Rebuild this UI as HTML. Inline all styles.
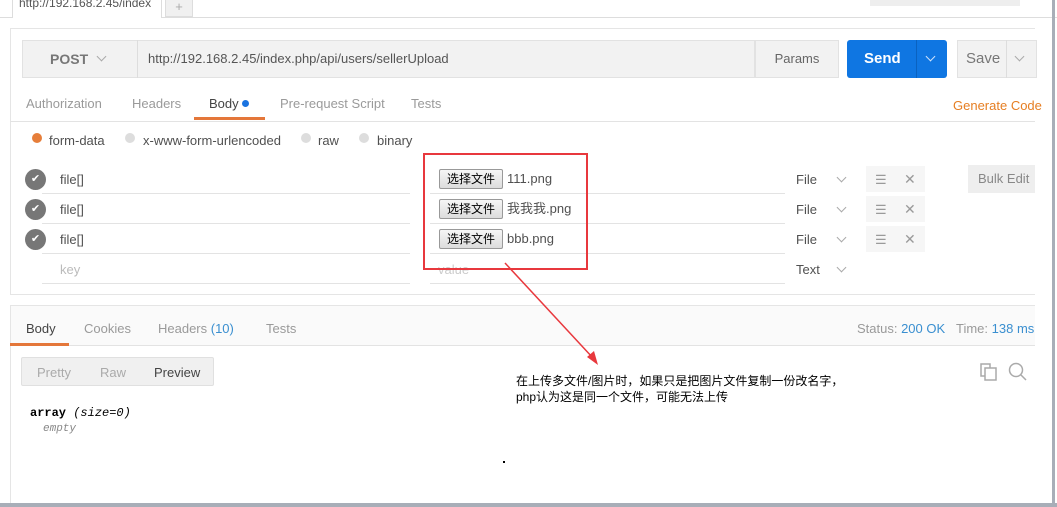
<!DOCTYPE html>
<html><head><meta charset="utf-8"><style>
*{margin:0;padding:0;box-sizing:border-box}
body{width:1057px;height:507px;overflow:hidden;background:#fff;position:relative;font-family:"Liberation Sans","Noto Sans CJK SC",sans-serif;font-size:13px;color:#505050}
.a{position:absolute;white-space:nowrap;line-height:16px}
.g{color:#9a9a9a}
.l{position:absolute;height:1px;background:#e3e3e3}
.btn{position:absolute;width:64px;height:20px;border:1px solid #999;border-radius:2px;background:linear-gradient(#f6f6f6,#dcdcdc);color:#000;font-size:12px;text-align:center;line-height:18px}
.chk{position:absolute;width:21px;height:21px;border-radius:50%;background:#777;color:#fff;font-size:11px;text-align:center;line-height:21px}
.chev{position:absolute;width:7px;height:7px;border-right:1.3px solid #aaa;border-bottom:1.3px solid #aaa;transform:rotate(45deg)}
</style></head><body>
<div class="a" style="left:0;top:0;width:1057px;height:18px;border-bottom:1px solid #ddd;background:#fff"></div>
<div class="a" style="left:12px;top:-2px;width:150px;height:20px;border:1px solid #ddd;border-bottom:none;background:#fff"></div>
<div class="a" style="left:19px;top:-5px;color:#555;font-size:12px">http://192.168.2.45/index</div>
<div class="a" style="left:165px;top:-2px;width:28px;height:19px;background:#f0f0f0;border:1px solid #ddd;text-align:center;color:#aaa">+</div>
<div class="a" style="left:870px;top:0;width:150px;height:6px;background:#eee"></div>
<div class="a" style="left:1052px;top:0;width:3px;height:507px;background:#a8aeb8"></div>
<div class="a" style="left:10px;top:28px;width:1025px;height:267px;border:1px solid #e5e5e5;border-right:none;background:#fff"></div>
<div class="a" style="left:22px;top:40px;width:733px;height:38px;background:#f2f2f2;border:1px solid #e2e2e2"></div>
<div class="a" style="left:137px;top:40px;width:1px;height:38px;background:#ddd"></div>
<div class="a" style="left:50px;top:51px;font-size:14px;font-weight:bold;color:#777">POST</div>
<div class="chev" style="left:98px;top:53px"></div>
<div class="a" style="left:148px;top:51px;color:#555">http://192.168.2.45/index.php/api/users/sellerUpload</div>
<div class="a" style="left:755px;top:40px;width:84px;height:38px;background:#f2f2f2;border:1px solid #e2e2e2;text-align:center;line-height:36px;color:#666">Params</div>
<div class="a" style="left:847px;top:40px;width:100px;height:38px;background:#0f76e2;border-radius:3px"></div>
<div class="a" style="left:916px;top:40px;width:1px;height:38px;background:#0a62c0"></div>
<div class="a" style="left:864px;top:51px;font-size:15px;font-weight:bold;color:#fff">Send</div>
<div class="chev" style="left:927px;top:53px;border-color:#cfe2fa"></div>
<div class="a" style="left:957px;top:40px;width:80px;height:38px;background:#f2f2f2;border:1px solid #e2e2e2"></div>
<div class="a" style="left:1006px;top:40px;width:1px;height:38px;background:#ddd"></div>
<div class="a" style="left:966px;top:51px;font-size:15px;color:#777">Save</div>
<div class="chev" style="left:1016px;top:53px"></div>
<div class="a g" style="left:26px;top:96px">Authorization</div>
<div class="a g" style="left:132px;top:96px">Headers</div>
<div class="a" style="left:209px;top:96px;color:#444">Body</div>
<div class="a" style="left:242px;top:100px;width:7px;height:7px;border-radius:50%;background:#1a73e0"></div>
<div class="a g" style="left:280px;top:96px">Pre-request Script</div>
<div class="a g" style="left:411px;top:96px">Tests</div>
<div class="a" style="left:953px;top:98px;color:#e67e22">Generate Code</div>
<div class="l" style="left:10px;top:121px;width:1025px"></div>
<div class="a" style="left:194px;top:117px;width:71px;height:3px;background:#e4773a"></div>
<div class="a" style="left:32px;top:133px;width:10px;height:10px;border-radius:50%;background:#e67e3a"></div>
<div class="a" style="left:49px;top:133px">form-data</div>
<div class="a" style="left:125px;top:133px;width:10px;height:10px;border-radius:50%;background:#ddd"></div>
<div class="a" style="left:143px;top:133px">x-www-form-urlencoded</div>
<div class="a" style="left:301px;top:133px;width:10px;height:10px;border-radius:50%;background:#ddd"></div>
<div class="a" style="left:318px;top:133px">raw</div>
<div class="a" style="left:359px;top:133px;width:10px;height:10px;border-radius:50%;background:#ddd"></div>
<div class="a" style="left:377px;top:133px">binary</div>

<div class="chk" style="left:25px;top:169px">✔</div>
<div class="chk" style="left:25px;top:199px">✔</div>
<div class="chk" style="left:25px;top:229px">✔</div>
<div class="a" style="left:60px;top:172px">file[]</div>
<div class="a" style="left:60px;top:202px">file[]</div>
<div class="a" style="left:60px;top:232px">file[]</div>
<div class="a" style="left:60px;top:262px;color:#bbb">key</div>
<div class="l" style="left:42px;top:193px;width:368px"></div>
<div class="l" style="left:42px;top:223px;width:368px"></div>
<div class="l" style="left:42px;top:253px;width:368px"></div>
<div class="l" style="left:42px;top:283px;width:368px"></div>
<div class="l" style="left:430px;top:193px;width:355px"></div>
<div class="l" style="left:430px;top:223px;width:355px"></div>
<div class="l" style="left:430px;top:253px;width:355px"></div>
<div class="l" style="left:430px;top:283px;width:355px"></div>
<div class="btn" style="left:439px;top:169px">选择文件</div>
<div class="btn" style="left:439px;top:199px">选择文件</div>
<div class="btn" style="left:439px;top:229px">选择文件</div>
<div class="a" style="left:507px;top:171px">111.png</div>
<div class="a" style="left:507px;top:201px">我我我.png</div>
<div class="a" style="left:507px;top:231px">bbb.png</div>
<div class="a" style="left:438px;top:262px;color:#ccc">value</div>
<div class="a" style="left:423px;top:153px;width:165px;height:117px;border:2px solid #e8383d"></div>

<div class="a" style="left:796px;top:172px">File</div><div class="chev" style="left:838px;top:174px"></div>
<div class="a" style="left:796px;top:202px">File</div><div class="chev" style="left:838px;top:204px"></div>
<div class="a" style="left:796px;top:232px">File</div><div class="chev" style="left:838px;top:234px"></div>
<div class="a" style="left:796px;top:262px">Text</div><div class="chev" style="left:838px;top:264px"></div>
<div class="a" style="left:866px;top:166px;width:59px;height:26px;background:#f6f6f6"></div>
<div class="a" style="left:866px;top:196px;width:59px;height:26px;background:#f6f6f6"></div>
<div class="a" style="left:866px;top:226px;width:59px;height:26px;background:#f6f6f6"></div>
<div class="a g" style="left:875px;top:172px">☰</div><div class="a g" style="left:904px;top:171px;font-size:14px">✕</div>
<div class="a g" style="left:875px;top:202px">☰</div><div class="a g" style="left:904px;top:201px;font-size:14px">✕</div>
<div class="a g" style="left:875px;top:232px">☰</div><div class="a g" style="left:904px;top:231px;font-size:14px">✕</div>
<div class="a" style="left:968px;top:165px;width:67px;height:28px;background:#eee;color:#888;line-height:28px;padding-left:10px">Bulk Edit</div>

<div class="a" style="left:10px;top:305px;width:1025px;height:200px;border:1px solid #e5e5e5;border-right:none;background:#fff"></div>
<div class="a" style="left:11px;top:306px;width:1024px;height:40px;background:#fafafa;border-bottom:1px solid #e3e3e3"></div>
<div class="a" style="left:26px;top:321px;color:#444">Body</div>
<div class="a" style="left:10px;top:343px;width:59px;height:3px;background:#e4773a"></div>
<div class="a g" style="left:84px;top:321px">Cookies</div>
<div class="a g" style="left:158px;top:321px">Headers <span style="color:#3a8fd0">(10)</span></div>
<div class="a g" style="left:266px;top:321px">Tests</div>
<div class="a g" style="left:857px;top:321px">Status: <span style="color:#3a8fd0">200 OK</span></div>
<div class="a g" style="left:956px;top:321px">Time: <span style="color:#3a8fd0">138 ms</span></div>
<div class="a" style="left:21px;top:357px;width:193px;height:29px;background:#f0f0f0;border:1px solid #e0e0e0;border-radius:2px"></div>
<div class="a" style="left:37px;top:365px;color:#aaa">Pretty</div>
<div class="a" style="left:100px;top:365px;color:#aaa">Raw</div>
<div class="a" style="left:154px;top:365px;color:#444">Preview</div>
<div class="a" style="left:30px;top:405px;font-family:'Liberation Mono',monospace;font-size:12px;color:#000"><b>array</b> <i>(size=0)</i></div>
<div class="a" style="left:43px;top:421px;font-family:'Liberation Mono',monospace;font-size:11px;color:#888;font-style:italic">empty</div>
<div class="a" style="left:516px;top:373px;color:#000;font-size:12px;line-height:16px">在上传多文件/图片时，如果只是把图片文件复制一份改名字，<br>php认为这是同一个文件，可能无法上传</div>
<div class="a" style="left:503px;top:461px;width:2px;height:2px;background:#000"></div>
<svg class="a" style="left:0;top:0" width="1057" height="507">
<line x1="505" y1="263" x2="593" y2="358" stroke="#e8383d" stroke-width="1.5"/>
<polygon points="598,365 587,357 594,351" fill="#e8383d"/>
<g fill="none" stroke="#aaa" stroke-width="1.5"><rect x="981" y="364" width="9" height="12"/><rect x="985" y="368" width="11" height="12" fill="#fff"/>
<circle cx="1016" cy="370" r="6.5"/><line x1="1021" y1="375" x2="1026" y2="380"/></g>
</svg>
<div class="a" style="left:0;top:503px;width:1057px;height:4px;background:#a8aeb8"></div>
</body></html>
